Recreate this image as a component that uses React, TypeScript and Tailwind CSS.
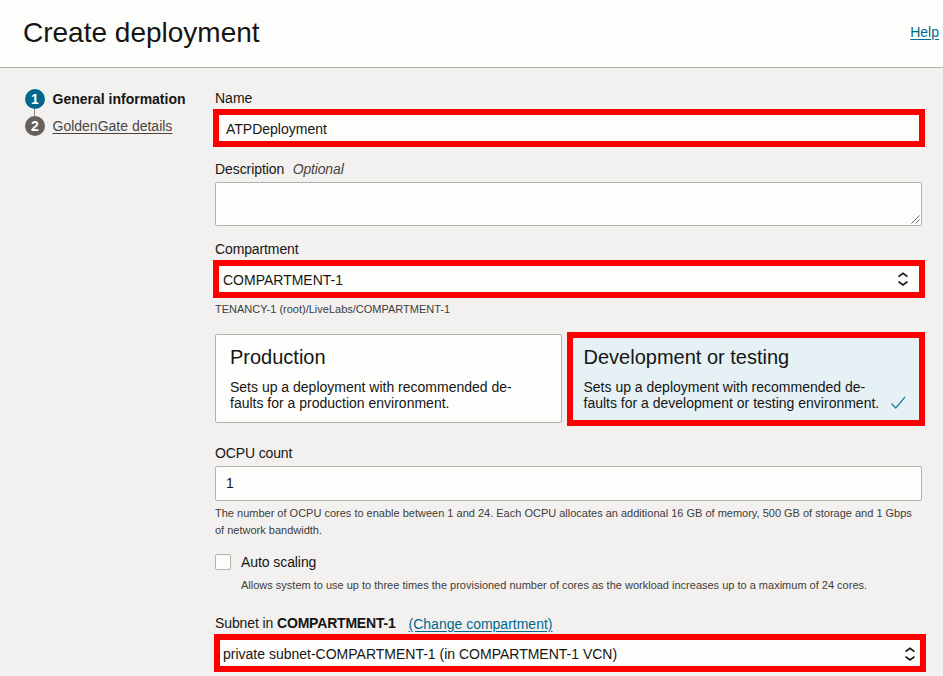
import type { ReactNode } from "react";

function SortArrows({ className }: { className: string }) {
  return (
    <svg className={className} width="12" height="16" viewBox="0 0 12 16" fill="none" stroke="#161513" strokeWidth="1.7">
      <path d="M1.5 5.6 6 2.2 10.5 5.6M1.5 10.6 6 14 10.5 10.6" />
    </svg>
  );
}

function Highlight({ children, className }: { children: ReactNode; className: string }) {
  return (
    <div className={`flex h-[38px] w-[712px] items-center justify-between border-6 border-[#ff0000] bg-[#fdfefb] ${className}`}>
      {children}
    </div>
  );
}

function Label({ children, className }: { children: ReactNode; className: string }) {
  return <div className={`flex h-5 items-center whitespace-pre ${className}`}>{children}</div>;
}

function Step({ n, active }: { n: string; active?: boolean }) {
  return (
    <span
      className={`flex size-5 shrink-0 items-center justify-center rounded-full text-[14px] leading-5 font-bold text-white ${active ? "bg-[#00688c]" : "bg-[#665f5b]"}`}
    >
      {n}
    </span>
  );
}

export default function App() {
  return (
    <div className="flex h-[676px] w-[943px] flex-col overflow-hidden bg-[#f3f1f0] font-['Liberation_Sans',Arial,sans-serif] text-[14px] leading-4 text-[#161513]">
      <header className="flex h-[68px] shrink-0 items-center justify-between border-b border-[#b5b1ad] bg-[#fdfefb] pr-[4px] pl-[23px]">
        <h1 className="mt-[-1px] text-[28px] leading-9 whitespace-nowrap">Create deployment</h1>
        <a className="mt-[-3px] text-[#00688c] underline underline-offset-2">Help</a>
      </header>
      <div className="flex">
        <nav className="w-[215px] shrink-0 pt-[21px] pl-[25px]">
          <div className="flex items-center gap-[7.5px]">
            <Step n="1" active />
            <b className="whitespace-nowrap">General information</b>
          </div>
          <div className="ml-[9px] h-[7px] w-px bg-[#8b8580]" />
          <div className="flex items-center gap-[7.5px]">
            <Step n="2" />
            <a className="whitespace-nowrap text-[#4a4541] underline underline-offset-2">GoldenGate details</a>
          </div>
        </nav>
        <main className="w-[707px] shrink-0">
          <Label className="mt-[20px]">Name</Label>
          <Highlight className="mt-px -ml-0.5 pl-[7px]">
            <span className="mt-[2px]">ATPDeployment</span>
          </Highlight>

          <Label className="mt-[12px]">
            <span className="tracking-[-0.08px]">Description</span>
            <i className="ml-[8.5px] tracking-[-0.15px] text-[#4a4541]">Optional</i>
          </Label>
          <div className="mt-[3px] flex h-[44px] items-end justify-end rounded-[2px] border border-[#b5b1ad] bg-[#fdfefb] p-px">
            <svg width="9" height="9" viewBox="0 0 9 9" stroke="#55504c" strokeWidth="0.9">
              <path d="M.5 8.5l8-8M4.5 8.5l4-4" />
            </svg>
          </div>

          <Label className="mt-[13px] tracking-[-0.12px]">Compartment</Label>
          <Highlight className="mt-px -ml-0.5 pr-[10px] pl-[4px]">
            <span className="mt-[2px]">COMPARTMENT-1</span>
            <SortArrows className="" />
          </Highlight>
          <div className="mt-[3px] text-[11px] text-[#403c38]">TENANCY-1 (root)/LiveLabs/COMPARTMENT-1</div>

          <div className="mt-[15px] -mr-[3px] flex items-start justify-between">
            <section className="mt-[2px] h-[89px] w-[347px] rounded-[2px] border border-[#b5b1ad] bg-[#fdfefb] pt-[10px] pl-[14px]">
              <h2 className="text-[20px] leading-6">Production</h2>
              <p className="mt-[10px] whitespace-nowrap">
                Sets up a deployment with recommended de-
                <br />
                faults for a production environment.
              </p>
            </section>
            <section className="flex h-[94px] w-[358px] items-end justify-between border-6 border-[#ff0000] bg-[#e5f1f5] pr-[13px] pb-[9px] pl-[10.5px]">
              <div>
                <h2 className="text-[20px] leading-6">Development or testing</h2>
                <p className="mt-[10px] whitespace-nowrap">
                  Sets up a deployment with recommended de-
                  <br />
                  faults for a development or testing environment.
                </p>
              </div>
              <svg className="mb-px" width="15" height="14" viewBox="0 0 15 14" fill="none" stroke="#227e9e" strokeWidth="1.2">
                <path d="M.5 7.5 4.8 12 14 1" />
              </svg>
            </section>
          </div>

          <Label className="mt-[17px] tracking-[-0.14px]">OCPU count</Label>
          <div className="mt-[3px] flex h-[35px] items-center rounded-[2px] border border-[#b5b1ad] bg-[#fdfefb] pb-px pl-[10px]">1</div>
          <p className="mt-[4px] text-[11px] leading-[17px] whitespace-nowrap text-[#403c38]">
            The number of OCPU cores to enable between 1 and 24. Each OCPU allocates an additional 16 GB of memory, 500 GB of storage and 1 Gbps
            <br />
            of network bandwidth.
          </p>

          <div className="mt-[13px] flex h-5 items-center gap-[10px] tracking-[-0.08px]">
            <span className="size-4 rounded-[2px] border border-[#b5b1ad] bg-[#fdfefb]" />
            Auto scaling
          </div>
          <p className="mt-[5px] ml-[26px] text-[11px] whitespace-nowrap text-[#403c38]">
            Allows system to use up to three times the provisioned number of cores as the workload increases up to a maximum of 24 cores.
          </p>

          <Label className="mt-[20px]">
            <span className="tracking-[-0.1px]">Subnet in </span>
            <b className="tracking-[-0.2px]">COMPARTMENT-1</b>
            <a className="mt-[2px] ml-[13px] text-[#00688c] underline underline-offset-2">(Change compartment)</a>
          </Label>
          <Highlight className="mt-px -ml-px pr-[4px] pl-[3px]">
            <span className="mt-[2px]">private subnet-COMPARTMENT-1 (in COMPARTMENT-1 VCN)</span>
            <SortArrows className="mt-[2px]" />
          </Highlight>
        </main>
      </div>
    </div>
  );
}
